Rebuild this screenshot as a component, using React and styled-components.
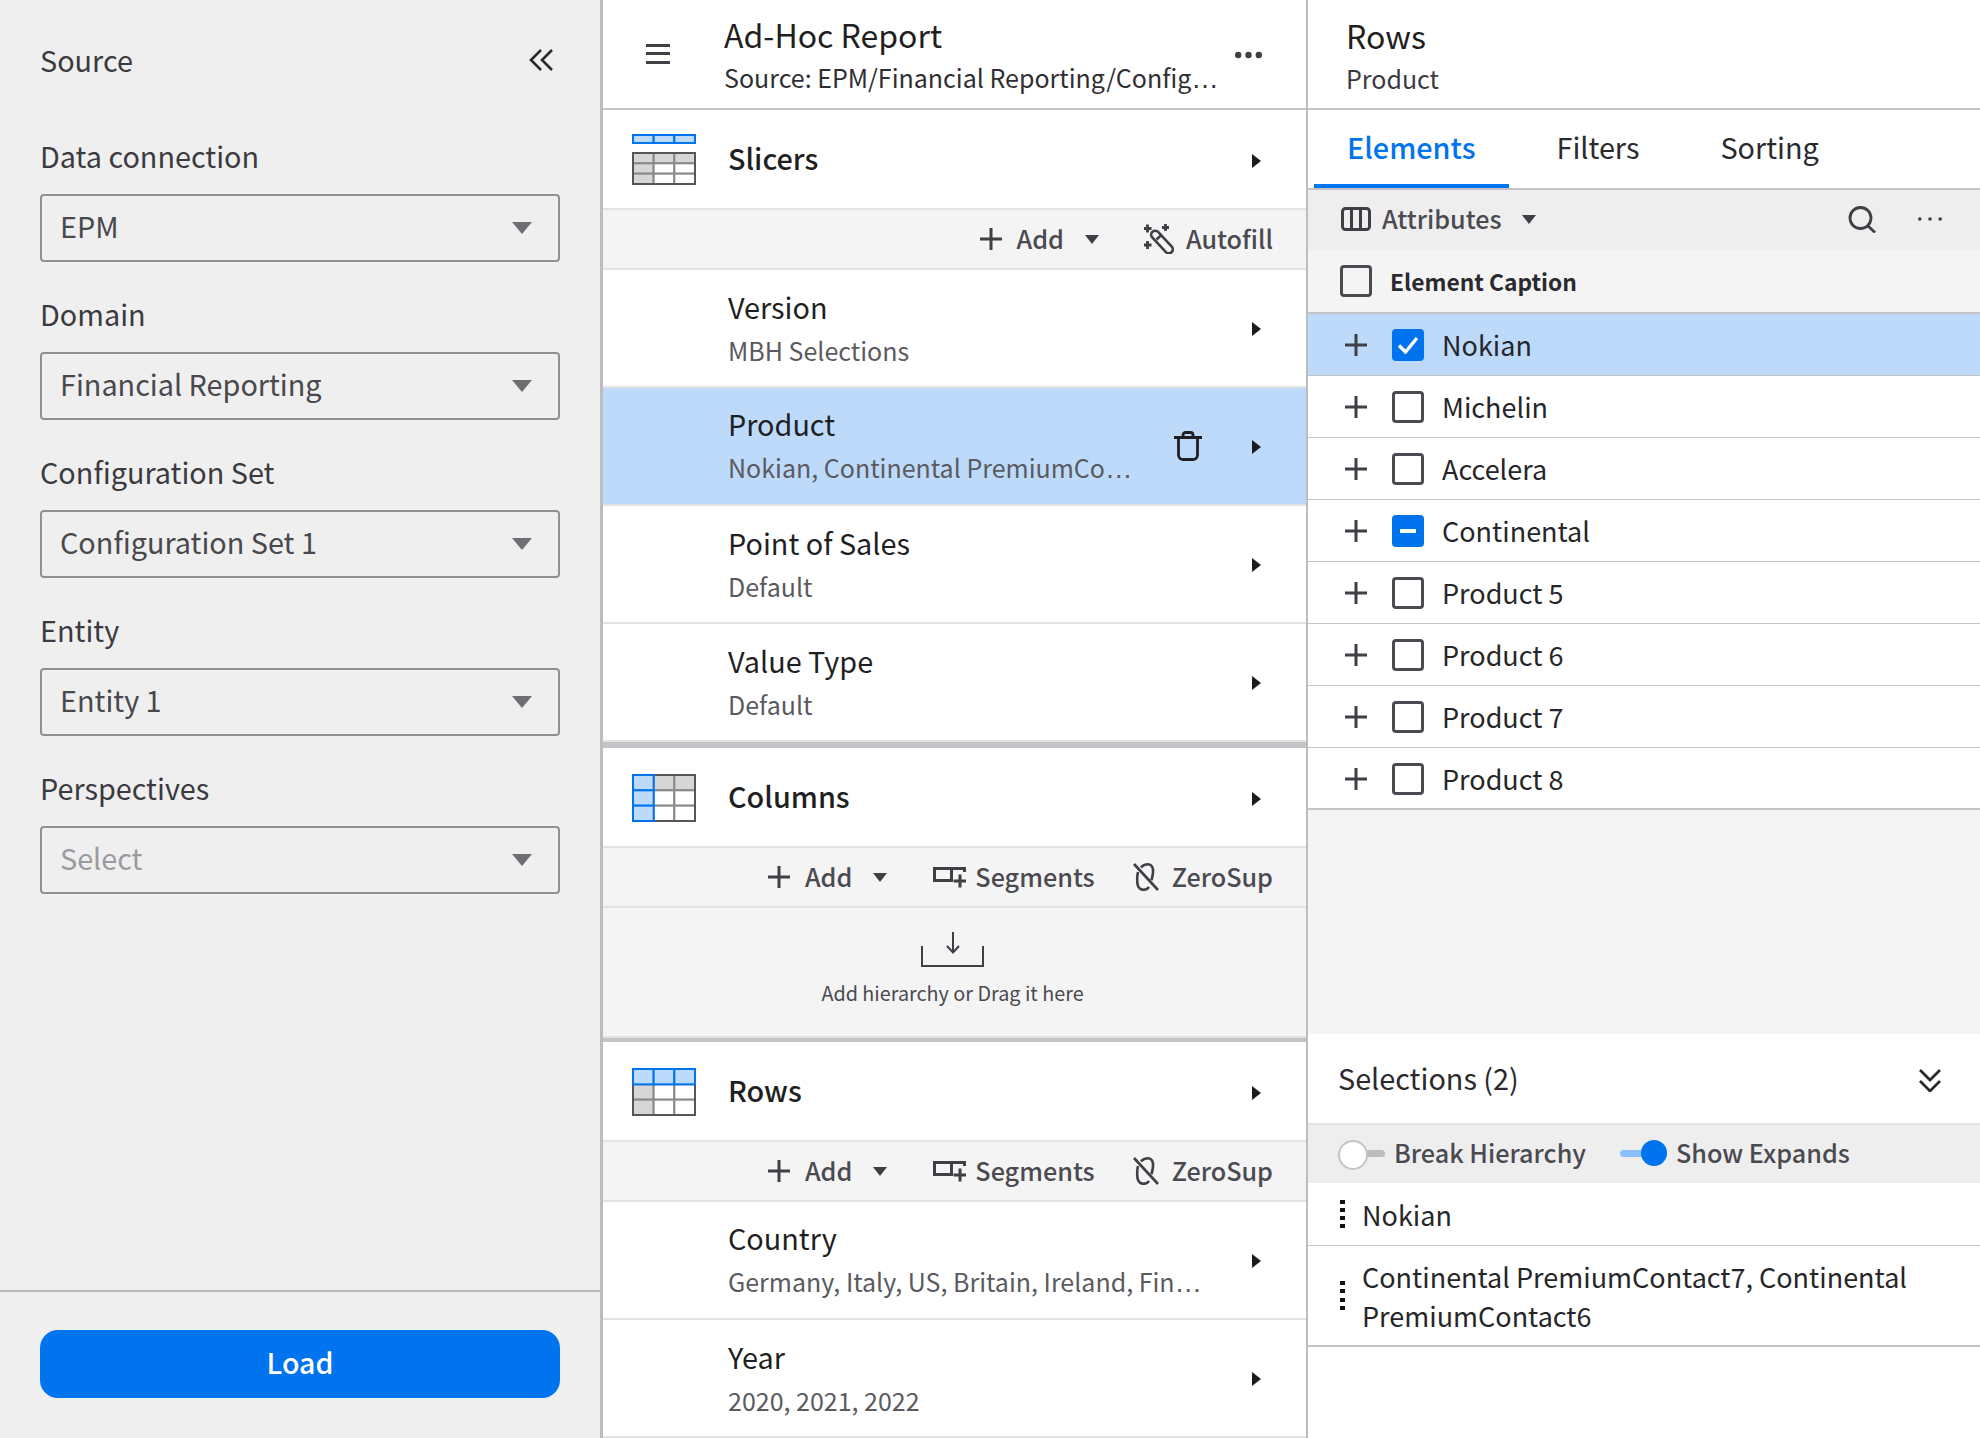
import React from "react";
import styled, { createGlobalStyle } from "styled-components";

const Global = createGlobalStyle`
  html, body { margin: 0; padding: 0; background: #fff; }
  body { font-family: "Noto Sans CJK JP", "Noto Sans", sans-serif; color: #1f1f23; }
  * { box-sizing: border-box; }
`;

const Page = styled.div`
  width: 1980px;
  height: 1438px;
  display: grid;
  grid-template-columns: 603px 705px 672px;
  overflow: hidden;
`;

/* ---------- left panel ---------- */
const SourcePanel = styled.aside`
  background: #efefef;
  border-right: 3px solid #bdbdc0;
  display: flex;
  flex-direction: column;
  height: 1438px;
`;
const SourceBody = styled.div`
  flex: 1;
  padding: 0 40px;
  border-bottom: 2px solid #b8b8ba;
`;
const SourceHead = styled.div`
  height: 124px;
  display: flex;
  align-items: center;
  justify-content: space-between;
  padding: 0 7px 5px 0;
  font-size: 28.8px;
  color: #3a3a3f;
`;
const Field = styled.div`
  height: 158px;
`;
const FieldLabel = styled.div`
  height: 70px;
  line-height: 64px;
  font-size: 28.8px;
  color: #3a3a3f;
`;
const SelectBox = styled.div`
  height: 68px;
  border: 2px solid #8f8f94;
  border-radius: 4px;
  display: flex;
  align-items: center;
  justify-content: space-between;
  padding: 0 26px 0 18px;
  font-size: 28.8px;
  color: ${(p) => (p.$placeholder ? "#9b9b9f" : "#48484d")};
`;
const SelectValue = styled.span`
  padding-bottom: 6px;
`;
const DownCaret = styled.span`
  width: 0;
  height: 0;
  border-left: ${(p) => p.$w / 2}px solid transparent;
  border-right: ${(p) => p.$w / 2}px solid transparent;
  border-top: ${(p) => p.$h}px solid ${(p) => p.$color || "#6e6e73"};
  flex: none;
`;
const SourceFoot = styled.div`
  height: 146px;
  padding: 38px 40px 0;
`;
const LoadButton = styled.button`
  width: 520px;
  height: 68px;
  border: 0;
  border-radius: 18px;
  padding: 0 0 6px;
  background: #0073ee;
  color: #fff;
  font: 500 28.5px "Noto Sans CJK JP", sans-serif;
`;

/* ---------- middle ---------- */
const Report = styled.main`
  border-right: 2px solid #bdbdc0;
  height: 1438px;
  display: flex;
  flex-direction: column;
`;
const ReportHead = styled.header`
  height: 110px;
  flex: none;
  border-bottom: 2px solid #c4c4c8;
  display: flex;
  align-items: center;
  padding: 0 44px 0 43px;
`;
const HeadText = styled.div`
  flex: 1;
  min-width: 0;
  margin: 0 12px 0 54px;
`;
const HeadTitle = styled.div`
  font-size: 32px;
  line-height: 44px;
  margin-bottom: 3px;
  color: #1f1f23;
`;
const HeadSub = styled.div`
  font-size: 25px;
  line-height: 36px;
  color: #2f2f33;
  white-space: nowrap;
`;
const HeadDots = styled.span`
  display: flex;
  margin-top: 2px;
`;
const Ellipsis = styled.span`
  font-family: "Liberation Sans", sans-serif;
  font-size: 1.1em;
`;
const Section = styled.section`
  border-bottom: ${(p) => p.$rule || 0}px solid #c4c4c8;
  flex: none;
`;
const SectionHead = styled.div`
  height: 100px;
  border-bottom: 2px solid #e3e3e3;
  display: flex;
  align-items: center;
  padding: 1px 45px 0 29px;
`;
const SectionTitle = styled.div`
  flex: 1;
  margin-left: 32px;
  padding-bottom: 4px;
  font-size: 28.8px;
  font-weight: 500;
  color: #1f1f23;
`;
const RightCaret = styled.span`
  width: 0;
  height: 0;
  flex: none;
  margin-top: 2px;
  border-top: 7px solid transparent;
  border-bottom: 7px solid transparent;
  border-left: 9px solid #1a1a1f;
`;
const Toolbar = styled.div`
  height: 60px;
  background: #f4f4f4;
  border-bottom: 2px solid #e3e3e3;
  display: flex;
  align-items: center;
  justify-content: flex-end;
  padding-right: 33px;
  font-size: 25.2px;
  font-weight: 500;
  color: #4a4a50;
`;
const ToolGroup = styled.div`
  display: flex;
  align-items: center;
  margin-left: ${(p) => p.$ml || 0}px;
  gap: ${(p) => p.$gap || 0}px;
`;
const ToolLabel = styled.span`
  padding-bottom: 3px;
`;
const Item = styled.div`
  height: 118px;
  border-bottom: 2px solid #e3e3e3;
  background: ${(p) => (p.$selected ? "#bddafa" : "#fff")};
  display: flex;
  align-items: center;
  padding: 0 45px 0 125px;
`;
const ItemText = styled.div`
  flex: 1;
  min-width: 0;
  padding-bottom: 1px;
  margin-right: 34px;
`;
const ItemTitle = styled.div`
  font-size: 28.8px;
  line-height: 40px;
  margin-bottom: 4px;
  color: #1f1f23;
`;
const ItemSub = styled.div`
  font-size: 25px;
  line-height: 38px;
  color: #5a5a60;
  white-space: nowrap;
`;
const Trash = styled.svg`
  flex: none;
  margin-right: 50px;
`;
const DropZone = styled.div`
  height: 130px;
  background: #f4f4f4;
  border-bottom: 2px solid #e3e3e3;
  display: flex;
  flex-direction: column;
  align-items: center;
  padding: 24px 4px 0 0;
  font-size: 19.8px;
  color: #4a4a50;
`;
const DropText = styled.div`
  margin-top: 10px;
  line-height: 32px;
`;

/* ---------- right ---------- */
const Side = styled.aside`
  height: 1438px;
  display: flex;
  flex-direction: column;
`;
const SideHead = styled.header`
  height: 110px;
  flex: none;
  border-bottom: 2px solid #c4c4c8;
  display: flex;
  flex-direction: column;
  justify-content: center;
  padding-left: 38px;
`;
const SideTitle = styled.div`
  font-size: 32px;
  line-height: 44px;
  margin-bottom: 3px;
`;
const SideSub = styled.div`
  font-size: 25px;
  line-height: 36px;
  color: #3a3a3f;
`;
const Tabs = styled.nav`
  height: 80px;
  flex: none;
  border-bottom: 2px solid #c4c4c8;
  display: flex;
  gap: 15px;
  padding-left: 6px;
`;
const Tab = styled.div`
  height: 78px;
  line-height: 74px;
  padding: 0 33px;
  font-size: 28.8px;
  font-weight: ${(p) => (p.$active ? 500 : 400)};
  color: ${(p) => (p.$active ? "#0073ee" : "#2a2a2e")};
  border-bottom: 4px solid ${(p) => (p.$active ? "#0073ee" : "transparent")};
`;
const AttrBar = styled.div`
  height: 60px;
  flex: none;
  background: #eeeeee;
  display: flex;
  align-items: center;
  padding: 0 38px 2px 33px;
  font-size: 25.2px;
  font-weight: 500;
  color: #4a4a50;
`;
const AttrName = styled.span`
  margin: 0 20px 0 11px;
  padding-bottom: 3px;
`;
const Push = styled.span`
  flex: 1;
`;
const CaptionRow = styled.div`
  height: 64px;
  flex: none;
  background: #f4f4f4;
  border-bottom: 2px solid #c4c4c8;
  display: flex;
  align-items: center;
  padding-left: 32px;
  gap: 18px;
  font-size: 22.8px;
  font-weight: 700;
  color: #2a2a2e;
`;
const Check = styled.span`
  width: 32px;
  height: 32px;
  flex: none;
  border-radius: 4px;
  border: ${(p) => (p.$on ? "0" : "3px solid #4a4a50")};
  background: ${(p) => (p.$on ? "#0073ee" : "transparent")};
  display: flex;
  align-items: center;
  justify-content: center;
`;
const Dash = styled.span`
  width: 16px;
  height: 4px;
  background: #fff;
`;
const ElementRow = styled.div`
  height: 62px;
  flex: none;
  background: ${(p) => (p.$selected ? "#bddafa" : "#fff")};
  border-bottom: ${(p) => (p.$last ? 2 : 1)}px solid #c4c4c8;
  display: flex;
  align-items: center;
  padding: 1px 0 0 37px;
  font-size: 27px;
  color: #26262a;
`;
const ElementName = styled.span`
  margin-left: 18px;
  padding-bottom: 1px;
`;
const PlusSlot = styled.span`
  width: 47px;
  flex: none;
  display: flex;
  align-items: center;
`;
const Well = styled.div`
  height: 224px;
  flex: none;
  background: #f4f4f4;
`;
const SelectionHead = styled.div`
  height: 91px;
  flex: none;
  border-bottom: 2px solid #e3e3e3;
  display: flex;
  align-items: center;
  justify-content: space-between;
  padding: 0 39px 0 30px;
  font-size: 28.8px;
  color: #2a2a2e;
`;
const SelectionTitle = styled.span`
  padding-bottom: 3px;
`;
const ChevronSvg = styled.svg`
  margin-top: 3px;
`;
const ToggleBar = styled.div`
  height: 58px;
  flex: none;
  background: #eeeeee;
  display: flex;
  align-items: center;
  padding: 0 0 2px 30px;
  font-size: 25.2px;
  font-weight: 500;
  color: #4a4a50;
`;
const ToggleGroup = styled.div`
  display: flex;
  align-items: center;
  gap: 9px;
  margin-right: 34px;
`;
const Toggle = styled.span`
  position: relative;
  width: 47px;
  height: 26px;
  flex: none;
  &::before {
    content: "";
    position: absolute;
    left: ${(p) => (p.$on ? "0" : "6px")};
    right: 0;
    top: 10px;
    height: 7px;
    border-radius: 4px;
    background: ${(p) => (p.$on ? "#8cc0fb" : "#bdbdc0")};
  }
  &::after {
    content: "";
    position: absolute;
    top: 0;
    left: ${(p) => (p.$on ? "21px" : "0")};
    width: 26px;
    height: 26px;
    border-radius: 50%;
    background: ${(p) => (p.$on ? "#0073ee" : "#fff")};
    border: ${(p) => (p.$on ? "0" : "2px solid #c4c4c8")};
  }
`;
const Selected = styled.div`
  height: ${(p) => (p.$tall ? 101 : 63)}px;
  flex: none;
  border-bottom: ${(p) => (p.$tall ? 2 : 1)}px solid #c4c4c8;
  display: flex;
  align-items: center;
  padding: 0 50px 0 32px;
  gap: 17px;
  font-size: 27px;
  line-height: 39px;
  color: #26262a;
`;
const Grip = styled.span`
  width: 5px;
  flex: none;
  display: flex;
  flex-direction: column;
  gap: 4.3px;
  & > i {
    display: block;
    width: 5px;
    height: 4px;
    background: #111;
  }
`;

/* ---------- icons ---------- */
const Plus = ({ size = 22, color = "#3f3f45" }) => (
  <svg width={size} height={size} viewBox="0 0 22 22" fill="none" stroke={color} strokeWidth="3">
    <path d="M11 0v22M0 11h22" />
  </svg>
);

const Hamburger = () => (
  <svg width="24" height="20" viewBox="0 0 24 20" fill="#3f3f45">
    <rect y="0" width="24" height="3" />
    <rect y="8" width="24" height="3" />
    <rect y="17" width="24" height="3" />
  </svg>
);

const HDots = ({ w = 27, r = 3.2, color = "#3f3f45" }) => (
  <svg width={w} height="8" viewBox={`0 0 ${w} 8`} fill={color}>
    <circle cx={r} cy="4" r={r} />
    <circle cx={w / 2} cy="4" r={r} />
    <circle cx={w - r} cy="4" r={r} />
  </svg>
);

const Collapse = () => (
  <svg width="24" height="22" viewBox="0 0 24 22" fill="none" stroke="#2a2a2e" strokeWidth="2.6">
    <path d="M12 1 2 11l10 10M23 1 13 11l10 10" />
  </svg>
);

const ChevronsDown = () => (
  <ChevronSvg width="22" height="23" viewBox="0 0 22 23" fill="none" stroke="#2a2a2e" strokeWidth="2.8">
    <path d="M1 1l10 10L21 1M1 12l10 10 10-10" />
  </ChevronSvg>
);

const INNER = "#8a8a8e";
const OUTER = "#55555a";
const NONE = { f: "none", s: "none" };
const B = { f: "#bcdafa", s: "#0073ee" };
const G = { f: "#d6d6d6", s: INNER };
const W = { f: "#fff", s: INNER };

const TableGrid = ({ y, h, rows, fills }) => {
  const cw = 62 / 3;
  const rh = (h - 2) / rows;
  const cells = [];
  for (let r = 0; r < rows; r++) {
    for (let c = 0; c < 3; c++) {
      cells.push(
        <rect
          key={`${r}-${c}`}
          x={1 + c * cw}
          y={y + 1 + r * rh}
          width={cw}
          height={rh}
          fill={fills[r][c].f}
          stroke={fills[r][c].s}
          strokeWidth="2"
        />
      );
    }
  }
  return <>{cells}</>;
};

const SlicersIcon = () => (
  <svg width="64" height="51" viewBox="0 0 64 51">
    <TableGrid y={0} h={10} rows={1} fills={[[B, B, B]]} />
    <TableGrid y={18} h={33} rows={3} fills={[[G, G, G], [G, W, W], [G, W, W]]} />
    <rect x="1" y="19" width="62" height="31" fill="none" stroke={OUTER} strokeWidth="2" />
  </svg>
);
const ColumnsIcon = () => (
  <svg width="64" height="48" viewBox="0 0 64 48">
    <TableGrid y={0} h={48} rows={3} fills={[[W, G, G], [W, W, W], [W, W, W]]} />
    <path d="M21.700 1H63V47H21.700" fill="none" stroke={OUTER} strokeWidth="2" />
    <TableGrid y={0} h={48} rows={3} fills={[[B, NONE, NONE], [B, NONE, NONE], [B, NONE, NONE]]} />
  </svg>
);
const RowsIcon = () => (
  <svg width="64" height="48" viewBox="0 0 64 48">
    <TableGrid y={0} h={48} rows={3} fills={[[W, W, W], [G, W, W], [G, W, W]]} />
    <path d="M1 16.300V47H63V16.300" fill="none" stroke={OUTER} strokeWidth="2" />
    <TableGrid y={0} h={48} rows={3} fills={[[B, B, B], [NONE, NONE, NONE], [NONE, NONE, NONE]]} />
  </svg>
);

const Wand = () => (
  <svg width="30" height="30" viewBox="0 0 30 30" fill="none" stroke="#3f3f45" strokeWidth="2.6">
    <rect x="-14" y="-4" width="28" height="8" rx="4" transform="translate(18 18) rotate(47)" />
    <path d="M12.500 15.500l5.500-5" />
    <path d="M3.500 0.500v8M0 4.500h7.500M21.500 0v7M18 3.500h7M3.500 17v8M0 21h7.500" strokeWidth="2.8" />
  </svg>
);

const SegmentsIcon = () => (
  <svg width="33" height="22" viewBox="0 0 33 22" fill="none" stroke="#3f3f45" strokeWidth="3">
    <path d="M18.500 2.500H1.500v12h17zM18.500 2.500H31.500v3.500" />
    <path d="M27 8.500v13M20.500 15h12.500" />
  </svg>
);

const ZeroSupIcon = () => (
  <svg width="26" height="28" viewBox="0 0 26 28" fill="none" stroke="#3f3f45" strokeWidth="2.6">
    <path d="M8 4.500C10 2 13 1.300 15 1.300c3.500 0 5.500 3 5 8-.2 3-1 6-1.500 8" />
    <path d="M5 9c-1 4-1 8-.5 12 .5 4 3.500 5.800 6 5.800 2.500 0 4.500-1.300 5.500-2.800" />
    <path d="M1 1l24 26" />
  </svg>
);

const TrayIcon = () => (
  <svg width="63" height="35" viewBox="0 0 63 35" fill="none" stroke="#3f3f45" strokeWidth="2">
    <path d="M1 14v20h61V14" />
    <path d="M32 0v20M26 14l6 6.500 6-6.500" />
  </svg>
);

const ColumnsGlyph = () => (
  <svg width="30" height="24" viewBox="0 0 30 24" fill="none" stroke="#3f3f45" strokeWidth="3">
    <rect x="1.500" y="1.500" width="27" height="21" rx="3" />
    <path d="M10.500 1v22M19.500 1v22" />
  </svg>
);

const Search = () => (
  <svg width="28" height="27" viewBox="0 0 28 27" fill="none" stroke="#3f3f45" strokeWidth="2.8">
    <circle cx="12.500" cy="12" r="10.500" />
    <path d="M20 20l7 6.500" />
  </svg>
);

const Tick = () => (
  <svg width="22" height="18" viewBox="0 0 22 18" fill="none" stroke="#fff" strokeWidth="3.4">
    <path d="M2 9.500l6.500 6.500L20 2" />
  </svg>
);

const TrashIcon = () => (
  <Trash width="28" height="30" viewBox="0 0 28 30" fill="none" stroke="#1f1f23" strokeWidth="2.8">
    <path d="M0 6.500h28M9 6.500V4a2.500 2.500 0 0 1 2.500-2.500h5A2.500 2.500 0 0 1 19 4v2.500" />
    <path d="M4.500 6.500V24a4.500 4.500 0 0 0 4.500 4.500h10a4.500 4.500 0 0 0 4.500-4.500V6.500" />
  </Trash>
);

/* ---------- data ---------- */
const sourceFields = [
  ["Data connection", "EPM"],
  ["Domain", "Financial Reporting"],
  ["Configuration Set", "Configuration Set 1"],
  ["Entity", "Entity 1"],
  ["Perspectives", "Select", true],
];
const elements = [
  ["Nokian", "on"],
  ["Michelin"],
  ["Accelera"],
  ["Continental", "mixed"],
  ["Product 5"],
  ["Product 6"],
  ["Product 7"],
  ["Product 8"],
];

const AddTool = () => (
  <ToolGroup $gap={15}>
    <Plus />
    <ToolLabel>Add</ToolLabel>
    <ToolGroup $ml={6}>
      <DownCaret $w={14} $h={9} $color="#3f3f45" />
    </ToolGroup>
  </ToolGroup>
);

const ColumnTools = () => (
  <Toolbar>
    <AddTool />
    <ToolGroup $ml={46} $gap={9}>
      <SegmentsIcon />
      <ToolLabel>Segments</ToolLabel>
    </ToolGroup>
    <ToolGroup $ml={38} $gap={13}>
      <ZeroSupIcon />
      <ToolLabel>ZeroSup</ToolLabel>
    </ToolGroup>
  </Toolbar>
);

const Row = ({ title, sub, cut, selected }) => (
  <Item $selected={selected}>
    <ItemText>
      <ItemTitle>{title}</ItemTitle>
      <ItemSub>
        {sub}
        {cut && <Ellipsis>…</Ellipsis>}
      </ItemSub>
    </ItemText>
    {selected && <TrashIcon />}
    <RightCaret />
  </Item>
);

export default function App() {
  return (
    <>
      <Global />
      <Page>
        <SourcePanel>
          <SourceBody>
            <SourceHead>
              <span>Source</span>
              <Collapse />
            </SourceHead>
            {sourceFields.map(([label, value, placeholder]) => (
              <Field key={label}>
                <FieldLabel>{label}</FieldLabel>
                <SelectBox $placeholder={placeholder}>
                  <SelectValue>{value}</SelectValue>
                  <DownCaret $w={20} $h={12} />
                </SelectBox>
              </Field>
            ))}
          </SourceBody>
          <SourceFoot>
            <LoadButton>Load</LoadButton>
          </SourceFoot>
        </SourcePanel>

        <Report>
          <ReportHead>
            <Hamburger />
            <HeadText>
              <HeadTitle>Ad-Hoc Report</HeadTitle>
              <HeadSub>
                Source: EPM/Financial Reporting/Config<Ellipsis>…</Ellipsis>
              </HeadSub>
            </HeadText>
            <HeadDots>
              <HDots />
            </HeadDots>
          </ReportHead>

          <Section $rule={6}>
            <SectionHead>
              <SlicersIcon />
              <SectionTitle>Slicers</SectionTitle>
              <RightCaret />
            </SectionHead>
            <Toolbar>
              <AddTool />
              <ToolGroup $ml={45} $gap={12}>
                <Wand />
                <ToolLabel>Autofill</ToolLabel>
              </ToolGroup>
            </Toolbar>
            <Row title="Version" sub="MBH Selections" />
            <Row title="Product" sub="Nokian, Continental PremiumCo" cut selected />
            <Row title="Point of Sales" sub="Default" />
            <Row title="Value Type" sub="Default" />
          </Section>

          <Section $rule={4}>
            <SectionHead>
              <ColumnsIcon />
              <SectionTitle>Columns</SectionTitle>
              <RightCaret />
            </SectionHead>
            <ColumnTools />
            <DropZone>
              <TrayIcon />
              <DropText>Add hierarchy or Drag it here</DropText>
            </DropZone>
          </Section>

          <Section>
            <SectionHead>
              <RowsIcon />
              <SectionTitle>Rows</SectionTitle>
              <RightCaret />
            </SectionHead>
            <ColumnTools />
            <Row title="Country" sub="Germany, Italy, US, Britain, Ireland, Fin" cut />
            <Row title="Year" sub="2020, 2021, 2022" />
          </Section>
        </Report>

        <Side>
          <SideHead>
            <SideTitle>Rows</SideTitle>
            <SideSub>Product</SideSub>
          </SideHead>
          <Tabs>
            <Tab $active>Elements</Tab>
            <Tab>Filters</Tab>
            <Tab>Sorting</Tab>
          </Tabs>
          <AttrBar>
            <ColumnsGlyph />
            <AttrName>Attributes</AttrName>
            <DownCaret $w={14} $h={9} $color="#3f3f45" />
            <Push />
            <Search />
            <ToolGroup $ml={42}>
              <HDots w={24} r={1.8} />
            </ToolGroup>
          </AttrBar>
          <CaptionRow>
            <Check />
            <span>Element Caption</span>
          </CaptionRow>
          {elements.map(([name, state], i) => (
            <ElementRow key={name} $selected={state === "on"} $last={i === elements.length - 1}>
              <PlusSlot>
                <Plus />
              </PlusSlot>
              <Check $on={!!state}>
                {state === "on" && <Tick />}
                {state === "mixed" && <Dash />}
              </Check>
              <ElementName>{name}</ElementName>
            </ElementRow>
          ))}
          <Well />
          <SelectionHead>
            <SelectionTitle>Selections (2)</SelectionTitle>
            <ChevronsDown />
          </SelectionHead>
          <ToggleBar>
            <ToggleGroup>
              <Toggle />
              <ToolLabel>Break Hierarchy</ToolLabel>
            </ToggleGroup>
            <ToggleGroup>
              <Toggle $on />
              <ToolLabel>Show Expands</ToolLabel>
            </ToggleGroup>
          </ToggleBar>
          <Selected>
            <Grip><i /><i /><i /><i /></Grip>
            <span>Nokian</span>
          </Selected>
          <Selected $tall>
            <Grip><i /><i /><i /><i /></Grip>
            <span>Continental PremiumContact7, Continental PremiumContact6</span>
          </Selected>
        </Side>
      </Page>
    </>
  );
}
